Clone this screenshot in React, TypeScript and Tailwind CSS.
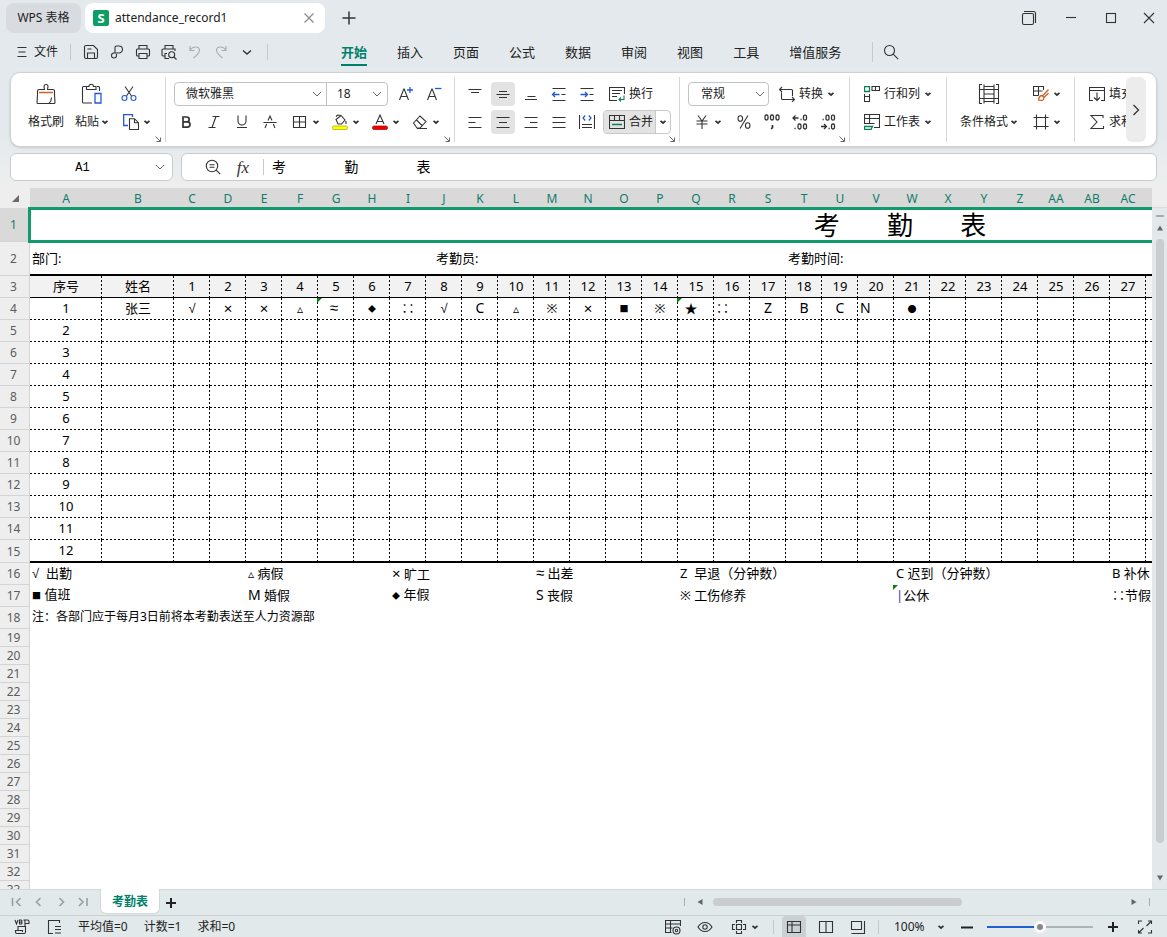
import type { ReactNode } from "react";

type IconProps = { children: ReactNode; size?: string; box?: number };

function Icon({ children, size = "size-4", box = 16 }: IconProps) {
  return (
    <svg
      className={`${size} shrink-0`}
      viewBox={`0 0 ${box} ${box}`}
      fill="none"
      stroke="#333"
      strokeWidth="1.1"
      aria-hidden="true"
    >
      {children}
    </svg>
  );
}

function Caret() {
  return (
    <svg className="size-2 shrink-0" viewBox="0 0 8 8" fill="none" stroke="#333" strokeWidth="1.7" aria-hidden="true">
      <path d="M1.5 2.8 4 5 6.500 2.8" />
    </svg>
  );
}

function Chevron() {
  return (
    <svg className="pointer-events-none h-3 w-3 shrink-0" viewBox="0 0 12 12" fill="none" stroke="#666" strokeWidth="1" aria-hidden="true">
      <path d="M2 4 6 8l4-4" />
    </svg>
  );
}

/* Ribbon buttons */

function ToolButton({ label, children, active = false }: { label: string; children: ReactNode; active?: boolean }) {
  return (
    <button aria-label={label} className="flex h-6 w-7 shrink-0 items-center justify-center">
      <span className={`flex size-6 items-center justify-center rounded ${active ? "bg-[#e3e3e3]" : ""}`}>{children}</span>
    </button>
  );
}

function DropButton({ label, children }: { label: string; children: ReactNode }) {
  return (
    <button aria-label={label} className="flex h-6 w-10 shrink-0 items-center gap-1 pl-2">
      {children}
      <Caret />
    </button>
  );
}

function TextButton({ text, children, caret = true }: { text: string; children: ReactNode; caret?: boolean }) {
  return (
    <button className="flex h-6 shrink-0 items-center gap-1">
      {children}
      <span>{text}</span>
      {caret && <Caret />}
    </button>
  );
}

function Group({ children, launcher = false, className = "" }: { children: ReactNode; launcher?: boolean; className?: string }) {
  return (
    <div className={`relative flex shrink-0 border-r border-[#d5d7d8] pt-[5px] ${className}`}>
      {children}
      {launcher && (
        <button aria-label="更多设置" className="absolute right-1 bottom-0">
          <svg className="size-[6px]" viewBox="0 0 6 6" fill="none" stroke="#666" aria-hidden="true">
            <path d="M.5.5 5 5M5.5 1.5v4h-4" />
          </svg>
        </button>
      )}
    </div>
  );
}

const menuTabs = ["插入", "页面", "公式", "数据", "审阅", "视图", "工具", "增值服务"];

function TitleBar() {
  return (
    <header className="flex h-9 shrink-0 items-center pl-1.5 text-xs text-[#222]">
      <button className="h-[30px] w-[75px] shrink-0 rounded-lg bg-[#d8dce0]">WPS 表格</button>
      <div className="ml-1 flex h-[30px] w-60 shrink-0 items-center rounded-lg bg-white pr-2.5 pl-2">
        <span className="flex size-4 items-center justify-center rounded-xs bg-[#0b9f63] text-[13px] leading-none font-bold text-white">S</span>
        <span className="ml-1.5 flex-1">attendance_record1</span>
        <button aria-label="关闭标签">
          <Icon size="size-3" box={12}>
            <path d="m1.5 1.5 9 9m0-9-9 9" stroke="#888" />
          </Icon>
        </button>
      </div>
      <button aria-label="新建标签" className="ml-4">
        <Icon>
          <path d="M8 1.5v13M1.5 8h13" strokeWidth="1.5" />
        </Icon>
      </button>
      <div className="ml-auto flex items-center">
        <button aria-label="切换窗口" className="flex w-11 justify-center">
          <Icon>
            <rect x="1.5" y="3.5" width="11" height="11" rx="1.5" />
            <path d="M3 1.5h9.500a2 2 0 0 1 2 2V13" />
          </Icon>
        </button>
        <button aria-label="最小化" className="flex w-10 justify-center">
          <Icon>
            <path d="M3 7.5h10" />
          </Icon>
        </button>
        <button aria-label="最大化" className="flex w-10 justify-center">
          <Icon>
            <rect x="3.5" y="3.5" width="9" height="9" />
          </Icon>
        </button>
        <button aria-label="关闭" className="flex w-9 justify-center">
          <Icon>
            <path d="m3 3 10 10M13 3 3 13" />
          </Icon>
        </button>
      </div>
    </header>
  );
}

function QuickButton({ label, children }: { label: string; children: ReactNode }) {
  return (
    <button aria-label={label} className="flex w-[26px] shrink-0 items-center justify-center">
      {children}
    </button>
  );
}

function MenuBar() {
  return (
    <nav className="flex h-8 shrink-0 items-center pl-4 text-[13px] text-[#222]">
      <button className="flex shrink-0 items-center gap-1.5 text-xs">
        <Icon size="size-3" box={12}>
          <path d="M1.5 1.5h9M2.5 6h7M1.5 10.5h9" />
        </Icon>
        文件
      </button>
      <span className="mx-[7px] ml-3 h-4 w-px bg-[#c4c9cc]" />
      <QuickButton label="保存">
        <Icon>
          <path d="M1.5 13V3A1.5 1.5 0 0 1 3 1.5h7.5l4 4V13a1.5 1.5 0 0 1-1.5 1.5H3A1.5 1.5 0 0 1 1.5 13ZM4.5 14.5V9h7v5.5M4.5 5h4" />
        </Icon>
      </QuickButton>
      <QuickButton label="分享">
        <Icon>
          <path d="M6 8.5v-5A1.5 1.5 0 0 1 7.5 2H10a3.5 3.5 0 0 1 0 7H5a2.500 2.500 0 1 0 2.500 2.500V10" />
        </Icon>
      </QuickButton>
      <QuickButton label="打印">
        <Icon>
          <path d="M4 5V1.5h8V5M4 12H2.5a1 1 0 0 1-1-1V6a1 1 0 0 1 1-1h11a1 1 0 0 1 1 1v5a1 1 0 0 1-1 1H12M4 9.500h8v5H4z" />
        </Icon>
      </QuickButton>
      <QuickButton label="打印预览">
        <Icon>
          <path d="M4 5V1.500h8V5M4 12H2a1 1 0 0 1-1-1V6a1 1 0 0 1 1-1h12v2M6 9.500H4v5h4" />
          <circle cx="10.700" cy="10.700" r="3" />
          <path d="m13 13 2.500 2.500" />
        </Icon>
      </QuickButton>
      <QuickButton label="撤销">
        <Icon>
          <path d="M3 2v4.500h4.500M3 6.300C5.500 2 12 2 12.500 6c.3 3-3 5.500-6 8" stroke="#a9aeb2" />
        </Icon>
      </QuickButton>
      <QuickButton label="恢复">
        <Icon>
          <path d="M13 2v4.500H8.500M13 6.300C10.500 2 4 2 3.500 6c-.3 3 3 5.500 6 8" stroke="#a9aeb2" />
        </Icon>
      </QuickButton>
      <QuickButton label="更多">
        <Icon>
          <path d="M4 6.500 8 10l4-3.500" strokeWidth="1.400" />
        </Icon>
      </QuickButton>
      <span className="ml-[7px] h-4 w-px bg-[#c4c9cc]" />
      <div className="ml-[73px] flex items-center gap-[30px]">
        <button className="shrink-0 border-b-2 border-[#00806a] pt-0.5 leading-6 font-bold text-[#00806a]">开始</button>
        {menuTabs.map((tab) => (
          <button key={tab} className="shrink-0 leading-6">
            {tab}
          </button>
        ))}
      </div>
      <span className="ml-[31px] h-5 w-px bg-[#c4c9cc]" />
      <button aria-label="搜索" className="ml-2.5">
        <Icon>
          <circle cx="6.500" cy="6.500" r="5" />
          <path d="m10.200 10.200 5 5" />
        </Icon>
      </button>
    </nav>
  );
}

function Ribbon() {
  return (
    <section className="mx-2.5 mt-1 flex h-[75px] shrink-0 rounded-[10px] border border-[#cdd2d5] bg-white py-1 text-xs text-[#222] shadow-sm">
      <div className="flex flex-1 overflow-hidden">
        <Group launcher className="pr-[10px] pl-3">
          <button className="flex w-[46px] flex-col items-center">
            <Icon size="size-6" box={24}>
              <path d="M3.500 12.500V9A1.500 1.500 0 0 1 5 7.500h5.500l-.5-3a2 2 0 0 1 4 0l-.5 3H19A1.500 1.500 0 0 1 20.500 9v3.500l.5 8a1 1 0 0 1-1 1H4a1 1 0 0 1-1-1zM17.500 15.500c0 3-1 4.500-2.500 6" />
              <path d="M5 10.500h14" stroke="#d2622a" strokeWidth="1.500" />
            </Icon>
            <span className="mt-[6px] leading-5">格式刷</span>
          </button>
          <button className="flex w-[46px] flex-col items-center">
            <Icon size="size-6" box={24}>
              <path d="M6 4.500H3.500a1 1 0 0 0-1 1V20a1 1 0 0 0 1 1H12M17 4.500h1.500a1 1 0 0 1 1 1V9M6.500 7.500v-3H9c0-3 4.500-3 4.500 0H16v3z" />
              <path d="M15 11.500h6V21h-6z" stroke="#2457d6" strokeWidth="1.300" />
            </Icon>
            <span className="mt-[6px] flex items-center gap-0.5 leading-5">
              粘贴
              <Caret />
            </span>
          </button>
          <div className="flex flex-col gap-1">
            <button aria-label="剪切" className="flex h-6 w-7 items-center justify-center">
              <Icon>
                <path d="m4 .5 6.500 9.500M12 .5 5.500 10" />
                <circle cx="3.500" cy="12" r="2.500" stroke="#2457d6" />
                <circle cx="12.500" cy="12" r="2.500" stroke="#2457d6" />
              </Icon>
            </button>
            <DropButton label="复制">
              <Icon>
                <path d="M5 11.500H.7V.7h8.800V3" stroke="#2457d6" strokeWidth="1.300" />
                <path d="M6.500 4.700h5l4 4v6.800h-9zM11.500 4.700v4h4" />
              </Icon>
            </DropButton>
          </div>
        </Group>

        <Group launcher className="pr-1.5 pl-1.5">
          <div className="flex flex-col gap-1">
            <div className="flex items-center pl-0.5">
              <div className="flex h-6 rounded border border-[#c0c4c7]">
                <label className="flex w-[152px] items-center border-r border-[#c0c4c7] pr-[3px]">
                  <select aria-label="字体" className="h-full min-w-0 flex-1 appearance-none bg-transparent pl-[11px] outline-none">
                    <option>微软雅黑</option>
                  </select>
                  <Chevron />
                </label>
                <label className="flex w-[60px] items-center pr-1">
                  <select aria-label="字号" className="h-full min-w-0 flex-1 appearance-none bg-transparent pl-2.5 outline-none">
                    <option>18</option>
                  </select>
                  <Chevron />
                </label>
              </div>
              <span className="w-1" />
              <ToolButton label="增大字号">
                <Icon>
                  <path d="M1.500 14 5.800 3h.4l4.300 11M3 10.500h6" />
                  <path d="M12 1v6M9 4h6" stroke="#2457d6" strokeWidth="1.300" />
                </Icon>
              </ToolButton>
              <ToolButton label="减小字号">
                <Icon>
                  <path d="M1.500 14 5.800 3h.4l4.300 11M3 10.500h6" />
                  <path d="M9 2.500h6.500" stroke="#2457d6" strokeWidth="1.300" />
                </Icon>
              </ToolButton>
            </div>
            <div className="flex">
              <ToolButton label="加粗">
                <Icon>
                  <path d="M5 3h3.700a2.400 2.400 0 0 1 0 4.900H5zM5 7.900h4.400a2.600 2.600 0 0 1 0 5.200H5z" strokeWidth="1.700" />
                </Icon>
              </ToolButton>
              <ToolButton label="倾斜">
                <Icon>
                  <path d="M6.500 2.500h7M2.500 13.500h7M10 2.500l-4 11" />
                </Icon>
              </ToolButton>
              <ToolButton label="下划线">
                <Icon>
                  <path d="M4 1.500V7a4 4 0 0 0 8 0V1.500M3 13.500h10" />
                </Icon>
              </ToolButton>
              <ToolButton label="删除线">
                <Icon>
                  <path d="M1.500 8.500h13M6 6.500 8 2l2 4.500M4.700 10 3 14M11.300 10l1.700 4" />
                </Icon>
              </ToolButton>
              <DropButton label="边框">
                <Icon>
                  <path d="M1.500 2.500h12v11h-12zM7.500 2.500v11M1.500 8h12" />
                </Icon>
              </DropButton>
              <DropButton label="填充颜色">
                <Icon>
                  <path d="M4 5.500 9 1.500l4 4.500-3.500 4H6zM4 2.500l1.500-1.500L9 1.500M14 7v3" />
                  <rect x=".5" y="12" width="15" height="3.500" rx="1.500" fill="#ffff00" stroke="#a8a800" strokeWidth=".7" />
                </Icon>
              </DropButton>
              <DropButton label="字体颜色">
                <Icon>
                  <path d="m4 10 4-9 4 9M5.300 7.500h5.400" />
                  <rect x=".5" y="12" width="15" height="3.500" rx="1.500" fill="#f00000" stroke="#a80000" strokeWidth=".7" />
                </Icon>
              </DropButton>
              <DropButton label="清除">
                <Icon>
                  <path d="m1.500 9 6.500-7 6 5.500-6 6.500H5zM4.500 6l5.500 5.500M5 14.500h10" />
                </Icon>
              </DropButton>
            </div>
          </div>
        </Group>

        <Group launcher className="pr-2 pl-1.5">
          <div className="flex flex-col gap-1">
            <div className="flex">
              <ToolButton label="顶端对齐">
                <Icon>
                  <path d="M1.500 3.500h13M4 6.500h8" />
                </Icon>
              </ToolButton>
              <ToolButton label="垂直居中" active>
                <Icon>
                  <path d="M4 5.500h8M1.500 8.500h13M4 11.500h8" />
                </Icon>
              </ToolButton>
              <ToolButton label="底端对齐">
                <Icon>
                  <path d="M4.500 10.500h8M2 13.500h12" />
                </Icon>
              </ToolButton>
              <ToolButton label="减少缩进">
                <Icon>
                  <path d="M1.500 2.500h13M10.500 8.500h4M1.500 14.500h13" />
                  <path d="M8.500 8.500h-7M4 6 1.500 8.500 4 11" stroke="#2457d6" strokeWidth="1.300" />
                </Icon>
              </ToolButton>
              <ToolButton label="增加缩进">
                <Icon>
                  <path d="M1.500 2.500h13M10.500 8.500h4M1.500 14.500h13" />
                  <path d="M1.500 8.500h7M6 6l2.500 2.500L6 11" stroke="#2457d6" strokeWidth="1.300" />
                </Icon>
              </ToolButton>
              <span className="w-2" />
              <TextButton text="换行" caret={false}>
                <Icon>
                  <path d="M15.500 8V1.500H.5v13H8M3 4.500h10M3 7.500h8M3 10.500h5" />
                  <path d="M15 9.500v4h-5M12 11.500l-2 2 2 2" stroke="#0b7f5c" />
                </Icon>
              </TextButton>
            </div>
            <div className="flex">
              <ToolButton label="左对齐">
                <Icon>
                  <path d="M1.500 3.500h13M1.500 8.500h7M1.500 13.500h13" />
                </Icon>
              </ToolButton>
              <ToolButton label="水平居中" active>
                <Icon>
                  <path d="M1.500 3.500h13M4 8.500h8M1.500 13.500h13" />
                </Icon>
              </ToolButton>
              <ToolButton label="右对齐">
                <Icon>
                  <path d="M1.500 3.500h13M7 8.500h7.500M1.500 13.500h13" />
                </Icon>
              </ToolButton>
              <ToolButton label="两端对齐">
                <Icon>
                  <path d="M1.500 3.500h13M1.500 8.500h13M1.500 13.500h13" />
                </Icon>
              </ToolButton>
              <ToolButton label="分散对齐">
                <Icon>
                  <path d="M.5 1v14M15.500 1v14M3 10.500h10M3 13.500h10" />
                  <path d="M6.200 1.500 4 4l2.200 2.500M9.800 1.500 12 4 9.800 6.500" stroke="#2457d6" strokeWidth="1.200" />
                </Icon>
              </ToolButton>
              <span className="w-[2px]" />
              <div className="flex h-6 overflow-hidden rounded border border-[#c9c9c9]">
                <button className="flex items-center gap-1 border-r border-[#c9c9c9] bg-[#e3e3e3] pr-0.5 pl-[5px]">
                  <Icon>
                    <path d="M.5 1.500h15v13H.5zM.5 6.500h15M5.500 1.500v5M10.500 1.500v5" />
                    <path d="M3 10.500h10" stroke="#0b7f5c" strokeWidth="1.300" />
                  </Icon>
                  合并
                </button>
                <button aria-label="合并选项" className="flex w-3.5 items-center justify-center">
                  <Caret />
                </button>
              </div>
            </div>
          </div>
        </Group>

        <Group launcher className="pr-[7px] pl-1.5">
          <div className="flex flex-col gap-1">
            <div className="flex items-center gap-2.5 pl-0.5">
              <label className="flex h-6 w-[81px] items-center rounded border border-[#c0c4c7] pr-0.5">
                <select aria-label="数字格式" className="h-full min-w-0 flex-1 appearance-none bg-transparent pl-3 outline-none">
                  <option>常规</option>
                </select>
                <Chevron />
              </label>
              <TextButton text="转换">
                <Icon>
                  <path d="M.5 3.500h12a1 1 0 0 1 1 1V10M3 1 .5 3.500 3 6M2.500 6.500v6a1 1 0 0 0 1 1h12M13 11l2.500 2.500L13 16" />
                </Icon>
              </TextButton>
            </div>
            <div className="flex">
              <DropButton label="货币格式">
                <Icon>
                  <path d="m4 1.500 4 5.500 4-5.500M2.500 7h11M2.500 10h11M8 7v8" />
                </Icon>
              </DropButton>
              <span className="w-1" />
              <ToolButton label="百分比">
                <Icon>
                  <ellipse cx="4.300" cy="4.500" rx="2.300" ry="2.800" />
                  <ellipse cx="11.700" cy="11.500" rx="2.300" ry="2.800" />
                  <path d="m12 1.500-8 13" />
                </Icon>
              </ToolButton>
              <ToolButton label="千位分隔">
                <Icon>
                  <g strokeWidth="1.300">
                    <rect x="1" y="1" width="3" height="5" rx="1.400" />
                    <rect x="6.500" y="1" width="3" height="5" rx="1.400" />
                    <rect x="12" y="1" width="3" height="5" rx="1.400" />
                    <path d="M8.500 11v2.500L7.200 15" strokeWidth="1.700" />
                  </g>
                </Icon>
              </ToolButton>
              <ToolButton label="增加小数">
                <Icon>
                  <g strokeWidth="1.300">
                    <path d="M6.500 4H1.200M3.500 1.500 1 4l2.500 2.500M8.500 5.500h1.200M2.500 14.500h1.200" />
                    <rect x="11.500" y="1.200" width="3" height="5" rx="1.400" />
                    <rect x="6" y="10" width="3" height="5" rx="1.400" />
                    <rect x="11.500" y="10" width="3" height="5" rx="1.400" />
                  </g>
                </Icon>
              </ToolButton>
              <ToolButton label="减少小数">
                <Icon>
                  <g strokeWidth="1.300">
                    <path d="M1 12.500h5.300M4 10l2.500 2.500L4 15M8.500 14.500h1.200M2.500 5.500h1.200" />
                    <rect x="6" y="1.200" width="3" height="5" rx="1.400" />
                    <rect x="11.500" y="1.200" width="3" height="5" rx="1.400" />
                    <rect x="11.500" y="10" width="3" height="5" rx="1.400" />
                  </g>
                </Icon>
              </ToolButton>
            </div>
          </div>
        </Group>

        <Group className="px-3.5">
          <div className="flex flex-col gap-1">
            <TextButton text="行和列">
              <Icon>
                <path d="M8 .5h7.500v4H8zM11.500.5v4M.5 8v7.500h5V8M.5 10.500h5" />
                <path d="M.5.5h5v5h-5z" stroke="#0b7f5c" strokeWidth="1.300" />
              </Icon>
            </TextButton>
            <TextButton text="工作表">
              <Icon>
                <path d="M.5 10V.5h15v13H10M.5 4.500h15M5.500.5v9M.5 9.500h10" />
                <path d="M.5 12.500h8L7 15.500H.5z" stroke="#0b7f5c" strokeWidth="1.300" />
              </Icon>
            </TextButton>
          </div>
        </Group>

        <Group className="pr-[9px] pl-2.5">
          <button className="flex w-16 flex-col items-center">
            <Icon size="size-6" box={24}>
              <path d="M5 2.500H2.500v19H5M19 2.500h2.500v19H19M7 2.500v5h10v-5M2.500 7.500h19M7 7.500v9h10v-9M7 12h10M2.500 16.500h19M7 21.500v-5h10v5M7 4.500h10M7 19.500h10" />
            </Icon>
            <span className="mt-[6px] flex items-center gap-0.5 leading-5">
              条件格式
              <Caret />
            </span>
          </button>
          <div className="ml-1 flex flex-col gap-1">
            <DropButton label="表格样式">
              <Icon>
                <path d="M10.500 4V.5H.5v9h5M.5 5h9M5.500.5v9" />
                <path d="m15.500 3.500-6 6.500M15.500 7 11 11.500M9 9.500c-2 0-3 1.500-3.500 4.500 3 1 5.500.5 5.500-2.500z" stroke="#d2622a" strokeWidth="1.300" />
              </Icon>
            </DropButton>
            <DropButton label="单元格样式">
              <Icon>
                <path d="M3.500.5v15M12.500.5v15M.5 3.500h15M.5 12.500h15" />
              </Icon>
            </DropButton>
          </div>
        </Group>

        <div className="flex shrink-0 flex-col gap-1 pt-[5px] pl-3.5">
          <TextButton text="填充">
            <Icon>
              <path d="M4 14.500H.5v-13h15v13H12M.5 4.500h15M8 6.500v8M5 11.500l3 3 3-3" />
            </Icon>
          </TextButton>
          <TextButton text="求和">
            <Icon>
              <path d="M14 4V1.500H2L8 8l-6 6.500h12.500V12" />
            </Icon>
          </TextButton>
        </div>
      </div>
      <button aria-label="展开更多" className="mr-2.5 flex w-5 shrink-0 items-center justify-center rounded-md bg-[#ececec]">
        <Icon>
          <path d="m5.500 3 5 5-5 5" strokeWidth="1.300" />
        </Icon>
      </button>
    </section>
  );
}

const titleFormula = "考                勤                表";
const titleText = "考       勤       表";

function FormulaBar() {
  return (
    <div className="mx-2.5 mt-1.5 mb-[7px] flex h-7 shrink-0 gap-2">
      <label className="flex w-[163px] shrink-0 items-center rounded-md border border-[#c8ccce] bg-white pr-1.5">
        <input
          aria-label="名称框"
          defaultValue="A1"
          className="min-w-0 flex-1 bg-transparent pt-0.5 text-center font-['Liberation_Mono','Noto_Sans_CJK_SC',monospace] text-xs outline-none"
        />
        <Chevron />
      </label>
      <div className="flex flex-1 items-center rounded-md border border-[#c8ccce] bg-white pl-[23px]">
        <button aria-label="浏览公式结果">
          <Icon>
            <circle cx="7" cy="7" r="5.700" />
            <path d="m11.200 11.200 4 4M4.500 5.800h5M4.500 8.300h5" />
          </Icon>
        </button>
        <button className="ml-3 w-5 font-['Liberation_Serif',serif] text-[17px] leading-none text-[#333] italic">fx</button>
        <span className="mr-2 ml-2.5 h-4 w-px bg-[#c8ccce]" />
        <input aria-label="编辑栏" defaultValue={titleFormula} className="min-w-0 flex-1 bg-transparent text-sm whitespace-pre outline-none" />
      </div>
    </div>
  );
}

/* Sheet */

const columns = "A B C D E F G H I J K L M N O P Q R S T U V W X Y Z AA AB AC".split(" ");
const days = Array.from({ length: 27 }, (_, i) => i + 1);

type Mark = { text: string; align?: string; look?: string; flagged?: boolean };

const arial = "font-['Liberation_Sans',sans-serif]";
const triangle = "font-['DejaVu_Sans',sans-serif] text-[12px] leading-none";

const marks: Record<number, Mark> = {
  1: { text: "√", look: arial },
  2: { text: "×", look: "text-[15px]" },
  3: { text: "×", look: "text-[15px]" },
  4: { text: "▵", look: triangle },
  5: { text: "≈ ", look: "font-['Liberation_Sans',sans-serif] text-[15px]", flagged: true },
  6: { text: "◆", look: "text-[8px]" },
  7: { text: "∷" },
  8: { text: "√", look: arial },
  9: { text: "C", look: "text-sm" },
  10: { text: "▵", look: triangle },
  11: { text: "※" },
  12: { text: "×", look: "text-[15px]" },
  13: { text: "■", look: "text-[9px]" },
  14: { text: "※" },
  15: { text: "★   ", flagged: true },
  16: { text: "∷", align: "text-left pl-0.5" },
  17: { text: "Z", look: "text-sm" },
  18: { text: "B", look: "text-sm" },
  19: { text: "C", look: "text-sm" },
  20: { text: "N", look: "text-sm", align: "text-left pl-0.5" },
  21: { text: "●", look: "text-[9px]" },
};

type Legend = { span: number; symbol: string; label: string; look?: string; flagged?: boolean };

const legendRows: Legend[][] = [
  [
    { span: 4, symbol: "√", label: "  出勤", look: arial },
    { span: 4, symbol: "▵", label: " 病假", look: triangle },
    { span: 4, symbol: "×", label: " 旷工", look: "text-[15px]" },
    { span: 4, symbol: "≈", label: " 出差", look: "font-['Liberation_Sans',sans-serif] text-[15px]" },
    { span: 6, symbol: "Z", label: "  早退（分钟数）" },
    { span: 6, symbol: "C", label: " 迟到（分钟数）" },
    { span: 2, symbol: "B", label: " 补休" },
  ],
  [
    { span: 4, symbol: "■", label: " 值班", look: "text-[9px]" },
    { span: 4, symbol: "M", label: " 婚假", look: "text-sm" },
    { span: 4, symbol: "◆", label: " 年假", look: "text-[8px]" },
    { span: 4, symbol: "S", label: " 丧假", look: "text-sm" },
    { span: 6, symbol: "※", label: " 工伤修养" },
    { span: 6, symbol: "|", label: "公休", look: "text-[#3b3fa0]", flagged: true },
    { span: 2, symbol: "∷", label: "节假日" },
  ],
];

const dashedRight =
  "bg-[repeating-linear-gradient(180deg,#000_0_2px,transparent_2px_4px)] bg-[length:1px_100%] bg-[position:100%_0] bg-no-repeat";
const dashedBoth =
  "bg-[repeating-linear-gradient(180deg,#000_0_2px,transparent_2px_4px),repeating-linear-gradient(90deg,#000_0_2px,transparent_2px_4px)] bg-[length:1px_100%,100%_1px] bg-[position:100%_0,0_100%] bg-no-repeat";

function Flag() {
  return (
    <svg className="absolute top-0 -left-px size-[5px]" viewBox="0 0 5 5" aria-hidden="true">
      <path d="M0 0h5L0 5z" fill="#0a7d0a" />
    </svg>
  );
}

function RowHead({ n, active = false }: { n: number; active?: boolean }) {
  return (
    <th
      scope="row"
      className={`border-r border-b border-[#d4d4d4] p-0 text-center leading-4 font-normal ${
        active ? "bg-[#d9d9d9] text-[#0e7d6a]" : "bg-[#eeeeee] text-[#5c5c5c]"
      }`}
    >
      <span className="pr-0.5 text-xs">{n}</span>
    </th>
  );
}

function Sheet() {
  return (
    <div className="flex min-h-0 flex-1">
      <div className="min-w-0 flex-1 overflow-hidden bg-white">
        <table className="w-[1770px] table-fixed border-separate border-spacing-0 text-[13px] leading-4 text-black">
          <colgroup>
            <col className="w-[30px]" />
            <col className="w-[72px]" />
            <col className="w-[72px]" />
            {days.map((d) => (
              <col key={d} className="w-9" />
            ))}
            <col />
          </colgroup>
          <thead>
            <tr className="h-5">
              <th className="bg-[#eeeeee] p-0">
                <svg className="mx-auto size-[7px]" viewBox="0 0 7 7" aria-hidden="true">
                  <path d="M7 0v7H0z" fill="#6b6b6b" />
                </svg>
              </th>
              {columns.map((c) => (
                <th key={c} scope="col" className="bg-[#d9d9d9] p-0 pt-0.5 text-center text-xs font-normal text-[#0e7d6a]">
                  {c}
                </th>
              ))}
              <th className="bg-[#d9d9d9] p-0" />
            </tr>
          </thead>
          <tbody>
            <tr className="h-[34px]">
              <RowHead n={1} active />
              <td colSpan={30} className="relative p-0 text-center text-[26px] leading-7 whitespace-pre">
                {titleText}
                <span className="absolute -inset-y-px right-0 -left-0.5 border-[3px] border-[#119a6b]" />
              </td>
            </tr>
            <tr className="h-[34px]">
              <RowHead n={2} />
              <td colSpan={9} className="border-b-2 border-black p-0 pl-0.5">
                部门:
              </td>
              <td colSpan={10} className="border-b-2 border-black p-0 pl-2.5">
                考勤员:
              </td>
              <td colSpan={11} className="border-b-2 border-black p-0 pl-0.5">
                考勤时间:
              </td>
            </tr>
            <tr className="h-[22px] text-center">
              <RowHead n={3} />
              {["序号", "姓名", ...days, ""].map((v, i) => (
                <td key={i} className={`border-b border-black bg-[#f2f2f2] p-0 pb-px ${dashedRight}`}>
                  {v}
                </td>
              ))}
            </tr>
            {Array.from({ length: 12 }, (_, r) => {
              const last = r === 11;
              const line = last ? `border-b-2 border-black ${dashedRight}` : dashedBoth;
              return (
                <tr key={r} className={`text-center ${last ? "h-[23px]" : "h-[22px]"}`}>
                  <RowHead n={r + 4} />
                  <td className={`p-0 pb-0.5 ${line}`}>{r + 1}</td>
                  <td className={`p-0 pb-0.5 ${line}`}>{r === 0 ? "张三" : ""}</td>
                  {days.map((d) => {
                    const mark = r === 0 ? marks[d] : undefined;
                    return (
                      <td key={d} className={`relative p-0 pb-0.5 whitespace-pre ${line} ${mark?.align ?? ""}`}>
                        {mark && <span className={mark.look ?? ""}>{mark.text}</span>}
                        {mark?.flagged && <Flag />}
                      </td>
                    );
                  })}
                  <td className={`p-0 ${line}`} />
                </tr>
              );
            })}
            {legendRows.map((row, r) => (
              <tr key={r} className="h-[22px]">
                <RowHead n={16 + r} />
                {row.map((item) => (
                  <td key={item.label} colSpan={item.span} className="relative p-0 pb-0.5 pl-0.5 whitespace-pre">
                    <span className={item.look ?? ""}>{item.symbol}</span>
                    {item.label}
                    {item.flagged && <Flag />}
                  </td>
                ))}
              </tr>
            ))}
            <tr className="h-[22px]">
              <RowHead n={18} />
              <td colSpan={30} className="p-0 pb-0.5 pl-0.5 text-xs">
                注：各部门应于每月3日前将本考勤表送至人力资源部
              </td>
            </tr>
            {Array.from({ length: 15 }, (_, i) => (
              <tr key={i} className="h-[18px]">
                <RowHead n={19 + i} />
                <td colSpan={30} className="p-0" />
              </tr>
            ))}
          </tbody>
        </table>
      </div>
      <div className="flex w-[15px] shrink-0 flex-col items-center bg-[#e3e8ea]">
        <div className="h-5 w-full shrink-0 border-b border-[#d9dcdd] bg-[#eeeeee]" />
        <span className="mt-[7px] h-0.5 w-2 bg-[#a9aeb0]" />
        <svg className="mt-2 size-[6px] shrink-0" viewBox="0 0 6 6" aria-hidden="true">
          <path d="m3 .5 3 5H0z" fill="#666" />
        </svg>
        <div className="mt-2 mb-8 w-2 flex-1 rounded-full bg-[#c9cdce]" />
        <svg className="mb-2 size-[6px] shrink-0" viewBox="0 0 6 6" aria-hidden="true">
          <path d="M0 .5h6l-3 5z" fill="#666" />
        </svg>
      </div>
    </div>
  );
}

const sheetNav = [
  { label: "第一个工作表", path: "M1.500 2v8M9.500 2 5.500 6l4 4" },
  { label: "上一个工作表", path: "M7.500 2 3.500 6l4 4" },
  { label: "下一个工作表", path: "m4.500 2 4 4-4 4" },
  { label: "最后一个工作表", path: "m2 2 4 4-4 4M10 2v8" },
];

function SheetTabs() {
  return (
    <div className="flex h-[26px] shrink-0 items-start border-t border-[#d2d8da] bg-[#e2e9eb]">
      <div className="flex h-6 w-[100px] shrink-0 items-center pl-[11px]">
        {sheetNav.map(({ label, path }) => (
          <button key={label} aria-label={label} className="mr-2.5 shrink-0">
            <Icon size="size-3" box={12}>
              <path d={path} stroke="#999ea1" strokeWidth="1.600" />
            </Icon>
          </button>
        ))}
      </div>
      <button className="-mt-px h-[25px] w-[60px] shrink-0 rounded-b-md border-x border-b border-[#d2d8da] bg-white pt-0.5 text-xs font-bold text-[#00806a]">
        考勤表
      </button>
      <button aria-label="新建工作表" className="flex h-6 w-[22px] items-center justify-center pt-0.5">
        <Icon size="size-3" box={12}>
          <path d="M6 1v10M1 6h10" strokeWidth="2" stroke="#222" />
        </Icon>
      </button>
      <div className="mr-[17px] ml-auto flex h-6 w-[466px] items-center">
        <span className="h-2 w-px bg-[#a9aeb0]" />
        <svg className="ml-3 size-[6px] shrink-0" viewBox="0 0 6 6" aria-hidden="true">
          <path d="M5.500 0v6l-5-3z" fill="#666" />
        </svg>
        <div className="mr-[9px] ml-2.5 h-2 flex-1">
          <div className="h-2 w-[61%] rounded-full bg-[#c9cdce]" />
        </div>
        <svg className="mr-3 size-[6px] shrink-0" viewBox="0 0 6 6" aria-hidden="true">
          <path d="M.5 0v6l5-3z" fill="#666" />
        </svg>
        <span className="h-2 w-px bg-[#a9aeb0]" />
      </div>
    </div>
  );
}

function StatusBar() {
  return (
    <footer className="flex h-[22px] shrink-0 items-center border-t border-[#cbd1d3] bg-[#e2e9eb] pl-3.5 text-xs text-[#222]">
      <button aria-label="宏">
        <Icon>
          <path d="m1 1 1.500 4L4 1M5.500 1v4H7a1 1 0 0 0 0-2H5.500 7a1 1 0 0 0 0-2zM11 8V2.500A1.500 1.500 0 0 0 9.500 1h4A1.500 1.500 0 0 1 15 2.500V4.500h-4M11.500 7v6a1.500 1.500 0 0 1-1.500 1.500H3A1.500 1.500 0 0 1 1.500 13v-1.500H8.500V13M4 11V7.500h7" />
        </Icon>
      </button>
      <button aria-label="统计" className="ml-[17px]">
        <Icon>
          <path d="M12.500 4V1.500h-11v13H6M8 7.500h6M8 10.500h6M8 14h6" />
        </Icon>
      </button>
      <span className="ml-[15px] shrink-0">平均值=0</span>
      <span className="ml-4 shrink-0">计数=1</span>
      <span className="ml-4 shrink-0">求和=0</span>
      <div className="ml-auto flex h-full items-center">
        <button aria-label="表格设置" className="flex w-8 justify-center">
          <Icon>
            <path d="M6.500 13.500H.5v-12h15V7M.5 5h15M.5 9h7M5.500 1.500v12" />
            <circle cx="11.500" cy="11.500" r="3.500" />
            <circle cx="11.500" cy="11.500" r="1.200" />
          </Icon>
        </button>
        <button aria-label="护眼模式" className="flex w-8 justify-center">
          <Icon>
            <path d="M1 8c3.500-6 10.500-6 14 0-3.500 6-10.500 6-14 0Z" />
            <circle cx="8" cy="8" r="2.200" />
          </Icon>
        </button>
        <button aria-label="阅读模式" className="flex w-10 items-center gap-1 pl-2.5">
          <Icon>
            <path d="M5.500 4V1.500h5V4M5.500 12v2.500h5V12M4 5.500H1.500v5H4M12 5.500h2.500v5H12M5.500 5.500h5v5h-5z" />
          </Icon>
          <Caret />
        </button>
        <span className="mx-2 ml-3 h-3.5 w-px bg-[#c3c8ca]" />
        <button aria-label="普通视图" className="flex h-full w-6 items-center justify-center rounded-t bg-[#cbd0d2]">
          <Icon>
            <path d="M1.500 2.500h13v11h-13zM1.500 6h13M6 2.500v11" />
          </Icon>
        </button>
        <button aria-label="页面布局" className="ml-1 flex w-8 justify-center">
          <Icon>
            <path d="M1.500 2.500h13v11h-13zM8 2.500v11" />
          </Icon>
        </button>
        <button aria-label="分页预览" className="flex w-8 justify-center">
          <Icon>
            <path d="M1.500 2.500h10v8h-10zM14.500 2v12.500h-13" />
          </Icon>
        </button>
        <span className="ml-1 h-3.5 w-px bg-[#c3c8ca]" />
        <button className="ml-[15px] flex w-[51px] items-center justify-between">
          100%
          <Caret />
        </button>
        <button aria-label="缩小" className="ml-4">
          <Icon size="size-3" box={12}>
            <path d="M0 6.500h12" strokeWidth="2" stroke="#222" />
          </Icon>
        </button>
        <input
          type="range"
          aria-label="缩放比例"
          min={0}
          max={100}
          defaultValue={50}
          className="mx-3.5 h-3 w-[106px] appearance-none bg-[linear-gradient(90deg,#1f5fd0_50%,#aeb3b5_50%)] bg-[length:100%_2px] bg-center bg-no-repeat [&::-webkit-slider-thumb]:size-3 [&::-webkit-slider-thumb]:appearance-none [&::-webkit-slider-thumb]:rounded-full [&::-webkit-slider-thumb]:border-[3px] [&::-webkit-slider-thumb]:border-white [&::-webkit-slider-thumb]:bg-[#888]"
        />
        <button aria-label="放大">
          <Icon size="size-3" box={12}>
            <path d="M1 6h10M6 1v10" strokeWidth="2" stroke="#222" />
          </Icon>
        </button>
        <button aria-label="全屏" className="mr-3.5 ml-[18px]">
          <Icon>
            <path d="M1.500 5V2H5M11 2h3.500v3M14.500 11v3H11M5 14H1.500v-3M14 2.500 9.500 7M2 13.500 6.500 9" />
          </Icon>
        </button>
      </div>
    </footer>
  );
}

export default function App() {
  return (
    <div className="flex h-screen flex-col overflow-hidden bg-[#eeeeee] bg-[linear-gradient(180deg,#e3e9ec_0,#e3e9ec_130px,#eeeeee_188px)] font-['Noto_Sans','Noto_Sans_CJK_SC',sans-serif]">
      <TitleBar />
      <MenuBar />
      <Ribbon />
      <FormulaBar />
      <Sheet />
      <SheetTabs />
      <StatusBar />
    </div>
  );
}
